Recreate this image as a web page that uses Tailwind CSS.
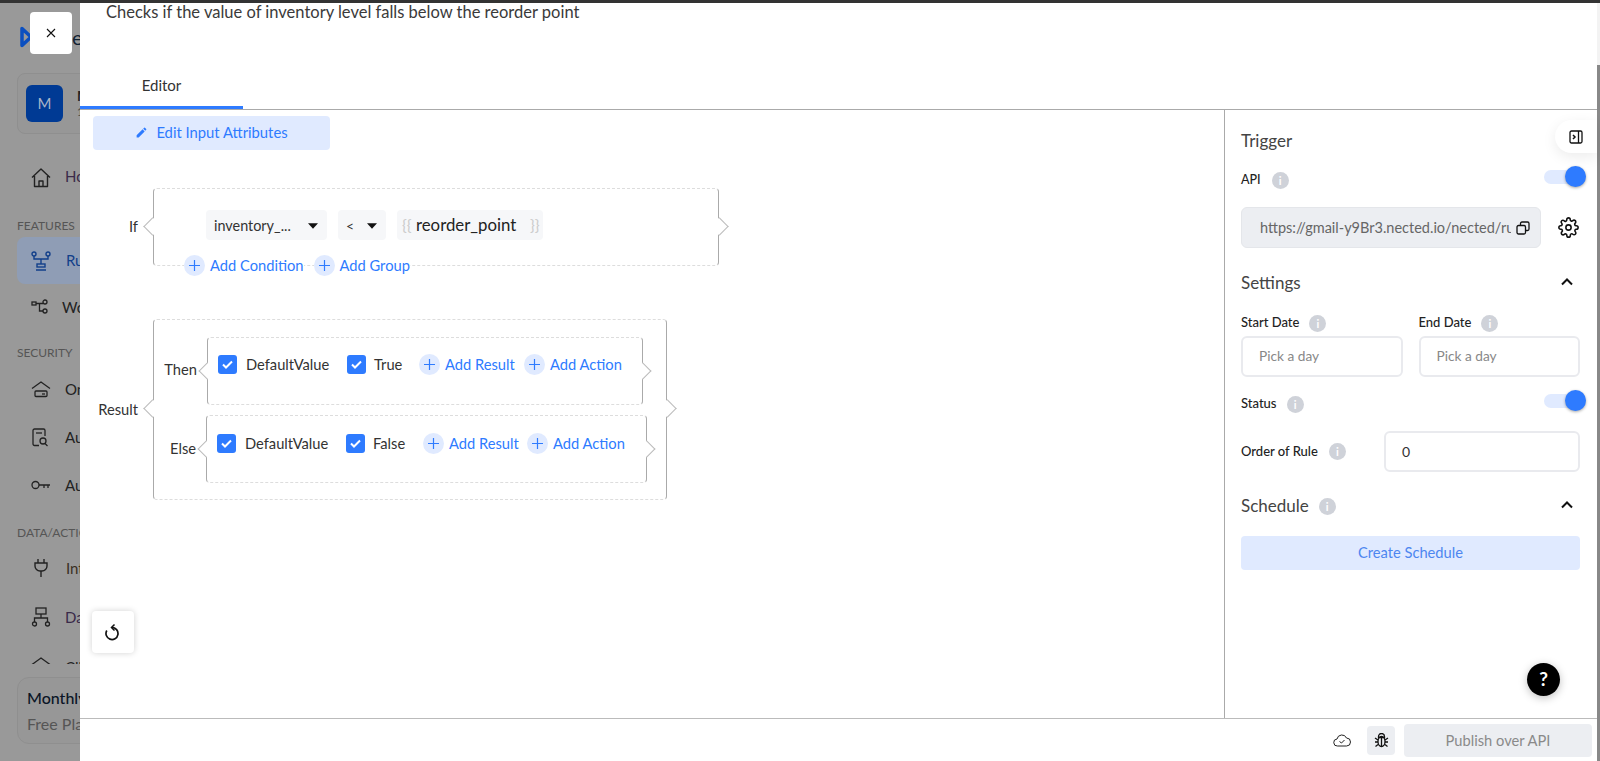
<!doctype html>
<html>
<head>
<meta charset="utf-8">
<script src="https://cdn.jsdelivr.net/npm/@tailwindcss/browser@4"></script>
</head>
<body class="overflow-hidden bg-white">
<div class="relative flex flex-col w-[1600px] h-[761px] overflow-hidden font-['Lato',sans-serif] text-[#333]">
  <div class="h-[3px] shrink-0 bg-[#333]"></div>
  <div class="flex flex-1 min-h-0">

    <!-- dimmed sidebar -->
    <aside class="flex flex-col w-[80px] shrink-0 overflow-hidden bg-[#999] whitespace-nowrap text-[#222]">
      <div class="flex items-center h-[20px] mt-[24px] ml-[19px]">
        <svg class="w-[14px] h-[24px] shrink-0" viewBox="0 0 14 24" fill="none"><path d="M3 3.500v17l9-8.500z" stroke="#0b4fc0" stroke-width="3.500" stroke-linejoin="round"/></svg>
        <span class="ml-[39px] text-[20px] leading-none text-[#123]">e</span>
      </div>
      <div class="flex items-center w-[200px] h-[61px] mt-[26px] ml-[17px] pl-[8px] gap-[14px] rounded-lg border border-[#8f8f8f] bg-[#979797]">
        <div class="flex items-center justify-center w-[37px] h-[37px] shrink-0 rounded-md bg-[#003a94] text-[#a8b4c8] text-[15px]">M</div>
        <div class="flex flex-col text-[14px] leading-[16px]"><span class="font-bold">Ma</span><span class="text-[11px] text-[#444]">1</span></div>
      </div>
      <div class="flex items-center h-[24px] mt-[32px] ml-[31px] gap-[14px]">
        <svg class="w-[20px] h-[20px] shrink-0" viewBox="0 0 20 20" fill="none" stroke="#222" stroke-width="1.400" stroke-linejoin="round"><path d="M1 9.500 10 1l9 8.500M3.500 8v10.500h13V8M8 18.500V13h4v5.500"/></svg>
        <span class="pb-[3px] text-[15px] text-[#3a2a4a]">Home</span>
      </div>
      <div class="mt-[28px] ml-[17px] h-[16px] text-[12px] leading-[16px] text-[#555]">FEATURES</div>
      <div class="flex items-center w-[200px] h-[47px] mt-[3px] ml-[17px] pl-[14px] gap-[15px] rounded-lg bg-[#8f9db5]">
        <svg class="w-[20px] h-[20px] shrink-0" viewBox="0 0 20 20" fill="none" stroke="#123f8a" stroke-width="1.400"><circle cx="3" cy="3" r="2"/><circle cx="17" cy="3" r="2"/><rect x="6" y="13" width="8" height="3"/><path d="M3 5v3h14V5M10 8v5M5 19h10"/></svg>
        <span class="text-[15px] text-[#123f8a]">Rules</span>
      </div>
      <div class="flex items-center h-[24px] mt-[11px] ml-[31px] gap-[13px]">
        <svg class="w-[18px] h-[16px] shrink-0" viewBox="0 0 18 16" fill="none" stroke="#222" stroke-width="1.300"><rect x="1" y="3" width="4" height="3"/><circle cx="14" cy="3" r="2"/><circle cx="14" cy="12" r="2"/><path d="M5 4.500h7M8.500 4.500V12H12"/></svg>
        <span class="text-[15px]">Workflow</span>
      </div>
      <div class="mt-[26px] ml-[17px] h-[16px] text-[12px] leading-[16px] text-[#555]">SECURITY</div>
      <div class="flex items-center h-[24px] mt-[16px] ml-[31px] gap-[14px]">
        <svg class="w-[20px] h-[18px] shrink-0" viewBox="0 0 20 18" fill="none" stroke="#222" stroke-width="1.300"><path d="M1 8.500 10 2l9 6.500"/><rect x="4" y="11" width="12" height="5.500" rx="1"/><path d="M11 14h3"/></svg>
        <span class="text-[15px]">On-premise</span>
      </div>
      <div class="flex items-center h-[24px] mt-[24px] ml-[32px] gap-[16px]">
        <svg class="w-[17px] h-[19px] shrink-0" viewBox="0 0 17 19" fill="none" stroke="#222" stroke-width="1.300"><path d="M7 17.500H2.500a1.500 1.500 0 0 1-1.500-1.500V2.500A1.500 1.500 0 0 1 2.500 1h9A1.500 1.500 0 0 1 13 2.500V8"/><path d="M4 5h6"/><circle cx="11" cy="13" r="3"/><path d="m13 15.500 2.500 2.500"/></svg>
        <span class="text-[15px]">Audit</span>
      </div>
      <div class="flex items-center h-[24px] mt-[24px] ml-[31px] gap-[14px]">
        <svg class="w-[20px] h-[10px] shrink-0" viewBox="0 0 20 10" fill="none" stroke="#222" stroke-width="1.300"><circle cx="4.500" cy="5" r="3.500"/><path d="M8 5h11M13 5v3M17 5v3"/></svg>
        <span class="text-[15px]">Authentication</span>
      </div>
      <div class="mt-[28px] ml-[17px] h-[16px] text-[12px] leading-[16px] text-[#555]">DATA/ACTIONS</div>
      <div class="flex items-center h-[24px] mt-[15px] ml-[34px] gap-[18px]">
        <svg class="w-[14px] h-[20px] shrink-0" viewBox="0 0 14 20" fill="none" stroke="#222" stroke-width="1.400"><path d="M4 1v4M10 1v4M1 5h12v3a5 5 0 0 1-5 5H6a5 5 0 0 1-5-5zM7 13v6"/></svg>
        <span class="text-[15px] text-[#3a2f1f]">Integrations</span>
      </div>
      <div class="flex items-center h-[24px] mt-[25px] ml-[31px] gap-[14px]">
        <svg class="w-[20px] h-[20px] shrink-0" viewBox="0 0 20 20" fill="none" stroke="#222" stroke-width="1.300"><rect x="5" y="1" width="10" height="6"/><path d="M10 7v4M3.500 15v-4h13v4"/><circle cx="3.500" cy="17" r="2"/><circle cx="16.500" cy="17" r="2"/></svg>
        <span class="text-[15px] text-[#3a2a4a]">Datasets</span>
      </div>
      <div class="flex items-start h-[8px] mt-[27px] ml-[31px] gap-[14px] overflow-hidden">
        <svg class="w-[20px] h-[18px] shrink-0" viewBox="0 0 20 18" fill="none" stroke="#222" stroke-width="1.300"><path d="M1 8.500 10 2l9 6.500"/></svg>
        <span class="text-[15px]">Clients</span>
      </div>
      <div class="flex flex-col justify-center w-[200px] h-[67px] mt-[13px] ml-[17px] pl-[9px] gap-[8px] rounded-xl border border-[#8f8f8f] bg-[#979797]">
        <span class="text-[16px] leading-[18px] font-medium text-[#0b1526]">Monthly</span>
        <span class="text-[16px] leading-[18px] text-[#555]">Free Plan</span>
      </div>
    </aside>

    <!-- drawer -->
    <main class="flex flex-col flex-1 min-w-0 bg-white">
      <header class="flex flex-col h-[107px] shrink-0 border-b border-[#aaa]">
        <p class="h-[18px] pl-[26px] text-[16.500px] leading-[18px] text-[#3a3a3a]">Checks if the value of inventory level falls below the reorder point</p>
        <div class="flex items-center justify-center w-[163px] h-[42px] mt-auto pb-[2px] border-b-[3px] border-[#2e7bff] text-[15px] text-[#333]">Editor</div>
      </header>

      <div class="flex flex-1 min-h-0">
        <!-- editor -->
        <section class="relative flex-1 min-w-0 text-[14.700px]">
          <button class="flex items-center justify-center w-[237px] h-[34px] mt-[6px] ml-[13px] pb-px gap-[8px] rounded bg-[#e0eaff] text-[#2e7bff] text-[14.800px]">
            <svg class="w-[13px] h-[13px]" viewBox="0 0 24 24" fill="#2e7bff"><path d="M3 17.250V21h3.750L17.810 9.940l-3.750-3.750zM20.710 7.040a1 1 0 0 0 0-1.410l-2.340-2.340a1 1 0 0 0-1.410 0l-1.830 1.830 3.750 3.750z"/></svg>
            Edit Input Attributes
          </button>

          <!-- If -->
          <div class="flex items-center mt-[38px]">
            <span class="w-[58px] pb-px text-right text-[#333]">If</span>
            <div class="relative w-[566px] h-[78px] ml-[15px] pl-[52px] pt-[21px] rounded border border-x-[#aaa] border-y-[#ddd] [border-top-style:dashed] [border-bottom-style:dashed]">
              <i class="absolute -left-[8px] top-[31px] w-[13px] h-[13px] rotate-45 bg-white border-l border-b border-[#bbb]"></i>
              <i class="absolute -right-[8px] top-[31px] w-[13px] h-[13px] rotate-45 bg-white border-t border-r border-[#bbb]"></i>
              <div class="flex items-center gap-[11px]">
                <div class="flex items-center w-[121px] h-[30px] pl-[8px] pt-px rounded bg-[#f6f7f9] text-[14.400px]">
                  <span class="flex-1">inventory_...</span>
                  <svg class="w-[10px] h-[6px] mr-[9px]" viewBox="0 0 11 6" fill="#111"><path d="M0 0h11L5.500 6z"/></svg>
                </div>
                <div class="flex items-center w-[48px] h-[30px] pl-[8px] pt-px rounded bg-[#f6f7f9] text-[14px]">
                  <span class="flex-1">&lt;</span>
                  <svg class="w-[10px] h-[6px] mr-[9px]" viewBox="0 0 11 6" fill="#111"><path d="M0 0h11L5.500 6z"/></svg>
                </div>
                <div class="flex items-center w-[146px] h-[30px] pl-[5px] rounded bg-[#f6f7f9]">
                  <span class="w-[14px] text-[#ccc] text-[16px]">{{</span>
                  <span class="w-[114px] text-[16.800px] text-[#222]">reorder_point</span>
                  <span class="text-[#ccc] text-[16px]">}}</span>
                </div>
              </div>
              <div class="flex items-center h-[21px] mt-[15px] -ml-[22px] gap-[10px] text-[#2e7bff]">
                <div class="flex items-center gap-[5px] bg-white"><span class="flex items-center justify-center w-[21px] h-[21px] rounded-full bg-[#e0eaff]"><svg class="w-[11px] h-[11px]" viewBox="0 0 11 11" stroke="#2e7bff" stroke-width="1.200"><path d="M5.500 0v11M0 5.500h11"/></svg></span>Add Condition</div>
                <div class="flex items-center gap-[5px] bg-white"><span class="flex items-center justify-center w-[21px] h-[21px] rounded-full bg-[#e0eaff]"><svg class="w-[11px] h-[11px]" viewBox="0 0 11 11" stroke="#2e7bff" stroke-width="1.200"><path d="M5.500 0v11M0 5.500h11"/></svg></span>Add Group</div>
              </div>
            </div>
          </div>

          <!-- Result -->
          <div class="flex items-center mt-[53px]">
            <span class="w-[58px] pb-px text-right">Result</span>
            <div class="relative w-[514px] h-[181px] ml-[15px] pt-[17px] rounded border border-x-[#aaa] border-y-[#ddd] [border-top-style:dashed] [border-bottom-style:dashed]">
              <i class="absolute -left-[8px] top-[82px] w-[13px] h-[13px] rotate-45 bg-white border-l border-b border-[#bbb]"></i>
              <i class="absolute -right-[8px] top-[82px] w-[13px] h-[13px] rotate-45 bg-white border-t border-r border-[#bbb]"></i>

              <div class="flex items-center">
                <span class="w-[43px] pb-[3px] text-right">Then</span>
                <div class="relative w-[436px] h-[68px] ml-[10px] pt-[16px] pl-[10px] rounded border border-x-[#aaa] border-y-[#ddd] [border-top-style:dashed] [border-bottom-style:dashed]">
                  <i class="absolute -left-[7px] top-[27px] w-[12px] h-[12px] rotate-45 bg-white border-l border-b border-[#bbb]"></i>
                  <i class="absolute -right-[7px] top-[27px] w-[12px] h-[12px] rotate-45 bg-white border-t border-r border-[#bbb]"></i>
                  <div class="flex items-center h-[21px]">
                    <span class="flex items-center justify-center w-[19px] h-[19px] rounded-[3px] bg-[#2e7bff]"><svg class="w-[11px] h-[9px]" viewBox="0 0 11 9" fill="none" stroke="#fff" stroke-width="2"><path d="m1 4.500 3 3 6-6"/></svg></span>
                    <span class="ml-[9px] w-[85px]">DefaultValue</span>
                    <span class="flex items-center justify-center ml-[16px] w-[19px] h-[19px] rounded-[3px] bg-[#2e7bff]"><svg class="w-[11px] h-[9px]" viewBox="0 0 11 9" fill="none" stroke="#fff" stroke-width="2"><path d="m1 4.500 3 3 6-6"/></svg></span>
                    <span class="ml-[8px] w-[45px]">True</span>
                    <div class="flex items-center gap-[5px] w-[105px] text-[#2e7bff]"><span class="flex items-center justify-center w-[21px] h-[21px] rounded-full bg-[#e0eaff]"><svg class="w-[11px] h-[11px]" viewBox="0 0 11 11" stroke="#2e7bff" stroke-width="1.200"><path d="M5.500 0v11M0 5.500h11"/></svg></span>Add Result</div>
                    <div class="flex items-center gap-[5px] text-[#2e7bff]"><span class="flex items-center justify-center w-[21px] h-[21px] rounded-full bg-[#e0eaff]"><svg class="w-[11px] h-[11px]" viewBox="0 0 11 11" stroke="#2e7bff" stroke-width="1.200"><path d="M5.500 0v11M0 5.500h11"/></svg></span>Add Action</div>
                  </div>
                </div>
              </div>

              <div class="flex items-center mt-[10px]">
                <span class="w-[42px] pb-px text-right">Else</span>
                <div class="relative w-[441px] h-[68px] ml-[10px] pt-[17px] pl-[10px] rounded border border-x-[#aaa] border-y-[#ddd] [border-top-style:dashed] [border-bottom-style:dashed]">
                  <i class="absolute -left-[7px] top-[27px] w-[12px] h-[12px] rotate-45 bg-white border-l border-b border-[#bbb]"></i>
                  <i class="absolute -right-[7px] top-[27px] w-[12px] h-[12px] rotate-45 bg-white border-t border-r border-[#bbb]"></i>
                  <div class="flex items-center h-[21px]">
                    <span class="flex items-center justify-center w-[19px] h-[19px] rounded-[3px] bg-[#2e7bff]"><svg class="w-[11px] h-[9px]" viewBox="0 0 11 9" fill="none" stroke="#fff" stroke-width="2"><path d="m1 4.500 3 3 6-6"/></svg></span>
                    <span class="ml-[9px] w-[85px]">DefaultValue</span>
                    <span class="flex items-center justify-center ml-[16px] w-[19px] h-[19px] rounded-[3px] bg-[#2e7bff]"><svg class="w-[11px] h-[9px]" viewBox="0 0 11 9" fill="none" stroke="#fff" stroke-width="2"><path d="m1 4.500 3 3 6-6"/></svg></span>
                    <span class="ml-[8px] w-[50px]">False</span>
                    <div class="flex items-center gap-[5px] w-[104px] text-[#2e7bff]"><span class="flex items-center justify-center w-[21px] h-[21px] rounded-full bg-[#e0eaff]"><svg class="w-[11px] h-[11px]" viewBox="0 0 11 11" stroke="#2e7bff" stroke-width="1.200"><path d="M5.500 0v11M0 5.500h11"/></svg></span>Add Result</div>
                    <div class="flex items-center gap-[5px] text-[#2e7bff]"><span class="flex items-center justify-center w-[21px] h-[21px] rounded-full bg-[#e0eaff]"><svg class="w-[11px] h-[11px]" viewBox="0 0 11 11" stroke="#2e7bff" stroke-width="1.200"><path d="M5.500 0v11M0 5.500h11"/></svg></span>Add Action</div>
                  </div>
                </div>
              </div>
            </div>
          </div>

          <button class="absolute left-[12px] top-[501px] flex items-center justify-center w-[42px] h-[42px] rounded bg-white shadow-[0_0_6px_rgba(0,0,0,0.18)]">
            <svg class="w-[16px] h-[18px] -ml-[2px]" viewBox="0 0 16 18" fill="none" stroke="#111" stroke-width="1.700"><path d="M8 4.500A6 6 0 1 1 2.800 7.500"/><path d="M10.500 1.500 7.500 4.500l3 3" stroke-width="1.500"/></svg>
          </button>
        </section>

        <!-- right panel -->
        <section class="relative flex flex-col w-[373px] shrink-0 border-l border-[#aaa] pl-[16px] pr-[17px] pt-[21px]">
          <div class="h-[20px] text-[17px] leading-[20px] text-[#444]">Trigger</div>
          <div class="flex items-center h-[22px] mt-[18px]">
            <span class="text-[12.500px] font-medium text-[#222]">API</span>
            <span class="flex items-center justify-center w-[17px] h-[17px] ml-[11px] rounded-full bg-[#cfd2d9] text-white text-[11px] font-bold leading-none">i</span>
            <span class="relative ml-auto -mr-[6px] -translate-y-[3px] w-[42px] h-[14px] rounded-full bg-[#e0eaff]"><span class="absolute right-0 -top-[4px] w-[21px] h-[21px] rounded-full bg-[#2e7bff] shadow-[0_1px_3px_rgba(0,0,0,0.35)]"></span></span>
          </div>
          <div class="flex items-center mt-[16px]">
            <div class="flex items-center w-[300px] h-[41px] pl-[18px] pr-[10px] rounded-md border border-[#e4e6ea] bg-[#eceef2]">
              <span class="w-[251px] overflow-hidden whitespace-nowrap text-[14.500px] text-[#666]">https://gmail-y9Br3.nected.io/nected/rule/inventory</span>
              <svg class="w-[14px] h-[14px] ml-auto" viewBox="0 0 14 14" fill="none" stroke="#111" stroke-width="1.300"><rect x="1" y="4.500" width="8.500" height="8.500" rx="1.500"/><path d="M4.500 4.500V2.500A1.500 1.500 0 0 1 6 1h5.500A1.500 1.500 0 0 1 13 2.500V8a1.500 1.500 0 0 1-1.500 1.500h-2"/></svg>
            </div>
            <svg class="w-[21px] h-[21px] ml-[17px]" viewBox="0 0 24 24" fill="none" stroke="#111" stroke-width="1.800" stroke-linecap="round" stroke-linejoin="round"><circle cx="12" cy="12" r="3"/><path d="M19.400 15a1.650 1.650 0 0 0 .33 1.820l.06.06a2 2 0 1 1-2.830 2.830l-.06-.06a1.650 1.650 0 0 0-2.820 1.170V21a2 2 0 1 1-4 0v-.09a1.650 1.650 0 0 0-2.820-1.170l-.06.06a2 2 0 1 1-2.830-2.830l.06-.06A1.650 1.650 0 0 0 3.090 14H3a2 2 0 1 1 0-4h.09a1.650 1.650 0 0 0 1.170-2.820l-.06-.06a2 2 0 1 1 2.830-2.830l.06.06A1.650 1.650 0 0 0 10 3.090V3a2 2 0 1 1 4 0v.09a1.650 1.650 0 0 0 2.820 1.170l.06-.06a2 2 0 1 1 2.830 2.830l-.06.06A1.650 1.650 0 0 0 20.910 10H21a2 2 0 1 1 0 4h-.09a1.650 1.650 0 0 0-1.510 1z"/></svg>
          </div>
          <div class="flex items-center h-[20px] mt-[25px]">
            <span class="text-[17px] text-[#444]">Settings</span>
            <svg class="w-[12px] h-[8px] ml-auto mr-[7px] -mt-[3px]" viewBox="0 0 12 8" fill="none" stroke="#111" stroke-width="2"><path d="m1 6.500 5-5 5 5"/></svg>
          </div>
          <div class="flex mt-[21px] gap-[16px]">
            <div class="flex-1">
              <div class="flex items-center h-[18px]"><span class="text-[13px] font-medium text-[#222]">Start Date</span><span class="flex items-center justify-center w-[17px] h-[17px] ml-[10px] rounded-full bg-[#cfd2d9] text-white text-[11px] font-bold leading-none">i</span></div>
              <div class="flex items-center h-[41px] mt-[4px] pl-[16px] rounded-md border-2 border-[#e9eaee] text-[13.700px] text-[#888]">Pick a day</div>
            </div>
            <div class="flex-1">
              <div class="flex items-center h-[18px]"><span class="text-[13px] font-medium text-[#222]">End Date</span><span class="flex items-center justify-center w-[17px] h-[17px] ml-[10px] rounded-full bg-[#cfd2d9] text-white text-[11px] font-bold leading-none">i</span></div>
              <div class="flex items-center h-[41px] mt-[4px] pl-[16px] rounded-md border-2 border-[#e9eaee] text-[13.700px] text-[#888]">Pick a day</div>
            </div>
          </div>
          <div class="flex items-center h-[22px] mt-[16px]">
            <span class="text-[13px] font-medium text-[#222]">Status</span>
            <span class="flex items-center justify-center w-[17px] h-[17px] ml-[10px] rounded-full bg-[#cfd2d9] text-white text-[11px] font-bold leading-none">i</span>
            <span class="relative ml-auto -mr-[6px] -translate-y-[3px] w-[42px] h-[14px] rounded-full bg-[#e0eaff]"><span class="absolute right-0 -top-[4px] w-[21px] h-[21px] rounded-full bg-[#2e7bff] shadow-[0_1px_3px_rgba(0,0,0,0.35)]"></span></span>
          </div>
          <div class="flex items-center h-[41px] mt-[16px]">
            <span class="text-[13px] font-medium text-[#222]">Order of Rule</span>
            <span class="flex items-center justify-center w-[17px] h-[17px] ml-[11px] rounded-full bg-[#cfd2d9] text-white text-[11px] font-bold leading-none">i</span>
            <div class="flex items-center w-[196px] h-[41px] ml-auto pl-[16px] rounded-md border-2 border-[#e9eaee] text-[14px] text-[#333]">0</div>
          </div>
          <div class="flex items-center h-[20px] mt-[24px]">
            <span class="text-[17px] text-[#444]">Schedule</span>
            <span class="flex items-center justify-center w-[17px] h-[17px] ml-[10px] rounded-full bg-[#cfd2d9] text-white text-[11px] font-bold leading-none">i</span>
            <svg class="w-[12px] h-[8px] ml-auto mr-[7px] -mt-[3px]" viewBox="0 0 12 8" fill="none" stroke="#111" stroke-width="2"><path d="m1 6.500 5-5 5 5"/></svg>
          </div>
          <button class="h-[34px] mt-[20px] pb-[2px] rounded bg-[#e0eaff] text-[14.700px] text-[#4d86f0]">Create Schedule</button>

          <div class="absolute right-0 top-[10px] flex items-center w-[42px] h-[33px] pl-[14px] rounded-l-full bg-white shadow-[0_4px_14px_rgba(0,0,0,0.08)]">
            <svg class="w-[14px] h-[14px]" viewBox="0 0 14 14" fill="none" stroke="#111" stroke-width="1.300"><rect x="1" y="1" width="12" height="12" rx="1.500"/><path d="M9.500 1v12"/><path d="m4 5 2 2-2 2" stroke-width="1.500"/></svg>
          </div>
          <div class="absolute left-[302px] top-[553px] flex items-center justify-center w-[33px] h-[33px] rounded-full bg-black text-white text-[19px] font-bold shadow-[0_2px_8px_rgba(0,0,0,0.25)]">?</div>
        </section>
      </div>

      <footer class="flex items-center justify-end h-[43px] shrink-0 pr-[5px] border-t border-[#bbb]">
        <svg class="w-[18px] h-[13px]" viewBox="0 0 18 13" fill="none" stroke="#222" stroke-width="1"><path d="M4.500 12A3.500 3.500 0 0 1 4 5a5 5 0 0 1 9.500-1A4 4 0 0 1 13.500 12z"/><path d="m6.500 7.500 2 1.500 3-3"/></svg>
        <span class="flex items-center justify-center w-[28px] h-[29px] ml-[16px] rounded bg-[#eceef2]">
          <svg class="w-[15px] h-[15px]" viewBox="0 0 15 15" fill="none" stroke="#111" stroke-width="1.300"><ellipse cx="7.500" cy="8.500" rx="3.500" ry="5"/><path d="M4.500 3.500a3 3 0 0 1 6 0v1h-6zM1 5l3 2M14 5l-3 2M1 9h3M14 9h-3M1.500 13.500 4 11.500M13.500 13.500 11 11.500M7.500 5v8.500"/></svg>
        </span>
        <button class="w-[188px] h-[33px] ml-[9px] rounded bg-[#eceef2] text-[14.700px] text-[#8a8a8a]">Publish over API</button>
      </footer>
    </main>

    <!-- page scrollbar -->
    <div class="flex flex-col w-[3px] shrink-0 bg-[#f3f3f3]">
      <div class="h-[62px] shrink-0"></div>
      <div class="flex-1 bg-[#888]"></div>
    </div>
  </div>

  <button class="absolute left-[30px] top-[12px] flex items-center justify-center w-[42px] h-[42px] rounded bg-white">
    <svg class="w-[10px] h-[10px]" viewBox="0 0 10 10" stroke="#111" stroke-width="1.100"><path d="m1 1 8 8M9 1l-8 8"/></svg>
  </button>
</div>
</body>
</html>
